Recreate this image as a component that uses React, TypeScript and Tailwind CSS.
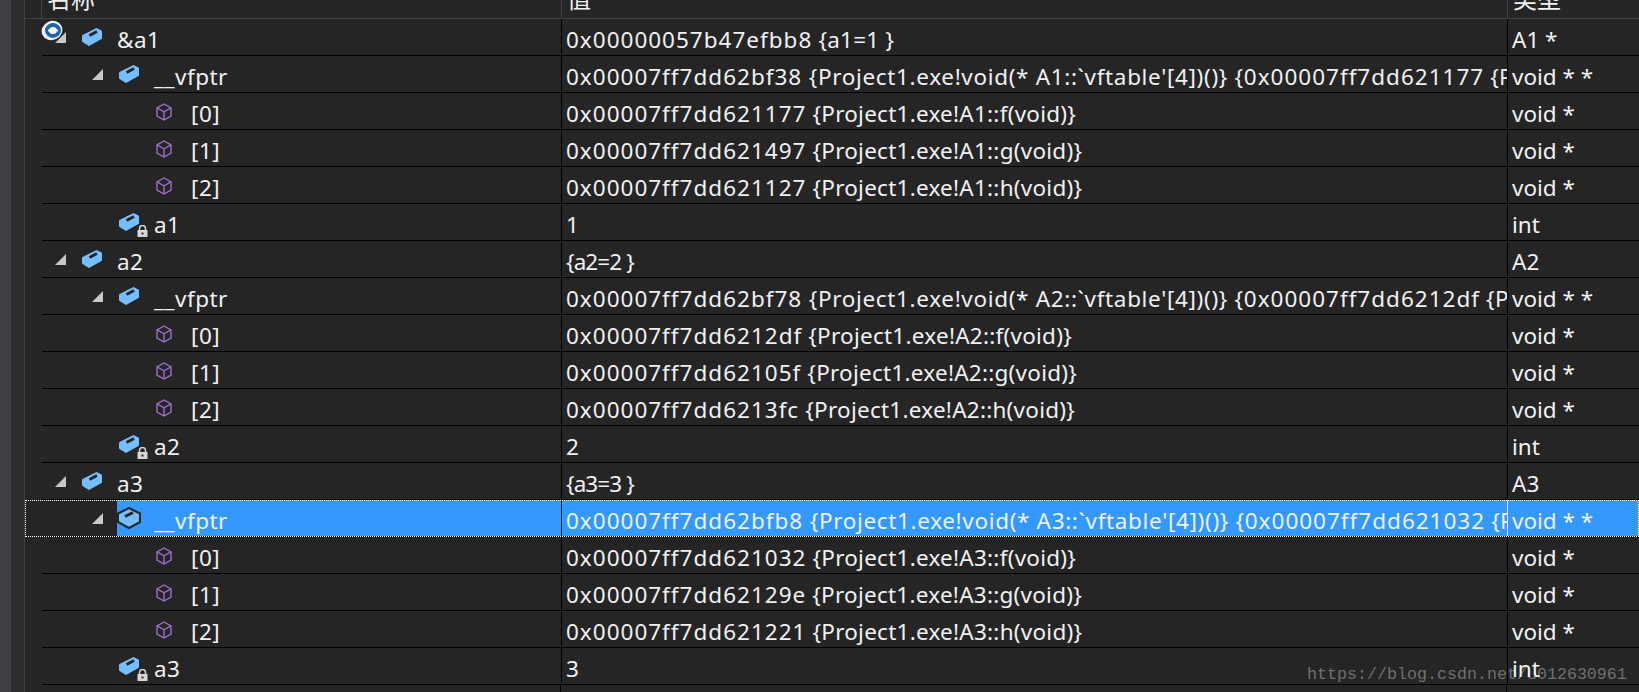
import React from 'react';

type Kind = 'object' | 'method' | 'locked';

interface WatchRow {
  depth: number;
  name: string;
  value: string;
  type: string;
  kind: Kind;
  open?: boolean;
  selected?: boolean;
}

const vtable = (n: string, addr: string, first: string): WatchRow[] => [
  {
    depth: 1,
    name: '__vfptr',
    value: `${addr} {Project1.exe!void(* ${n}::\`vftable'[4])()} {${first} {Project1.exe!${n}::f(void)}, ...`,
    type: 'void * *',
    kind: 'object',
    open: true,
  },
];

const method = (i: number, addr: string, n: string, fn: string): WatchRow => ({
  depth: 2,
  name: `[${i}]`,
  value: `${addr} {Project1.exe!${n}::${fn}(void)}`,
  type: 'void *',
  kind: 'method',
});

const rows: WatchRow[] = [
  { depth: 0, name: '&a1', value: '0x00000057b47efbb8 {a1=1 }', type: 'A1 *', kind: 'object' },
  ...vtable('A1', '0x00007ff7dd62bf38', '0x00007ff7dd621177'),
  method(0, '0x00007ff7dd621177', 'A1', 'f'),
  method(1, '0x00007ff7dd621497', 'A1', 'g'),
  method(2, '0x00007ff7dd621127', 'A1', 'h'),
  { depth: 1, name: 'a1', value: '1', type: 'int', kind: 'locked' },
  { depth: 0, name: 'a2', value: '{a2=2 }', type: 'A2', kind: 'object', open: true },
  ...vtable('A2', '0x00007ff7dd62bf78', '0x00007ff7dd6212df'),
  method(0, '0x00007ff7dd6212df', 'A2', 'f'),
  method(1, '0x00007ff7dd62105f', 'A2', 'g'),
  method(2, '0x00007ff7dd6213fc', 'A2', 'h'),
  { depth: 1, name: 'a2', value: '2', type: 'int', kind: 'locked' },
  { depth: 0, name: 'a3', value: '{a3=3 }', type: 'A3', kind: 'object', open: true },
  ...vtable('A3', '0x00007ff7dd62bfb8', '0x00007ff7dd621032').map(r => ({ ...r, selected: true })),
  method(0, '0x00007ff7dd621032', 'A3', 'f'),
  method(1, '0x00007ff7dd62129e', 'A3', 'g'),
  method(2, '0x00007ff7dd621221', 'A3', 'h'),
  { depth: 1, name: 'a3', value: '3', type: 'int', kind: 'locked' },
];

const Twisty = () => (
  <svg width="11" height="11" viewBox="0 0 11 11" className="shrink-0">
    <path d="M11 0V11H0Z" fill="#c8c8c8" />
  </svg>
);

const ObjectIcon = ({ selected }: { selected?: boolean }) =>
  selected ? (
    <svg width="24" height="22" viewBox="0 0 24 22" className="shrink-0">
      <path d="M12 1L23 6.5V15L12 21L1 15V6.5Z" fill="#75beff" stroke="#252526" strokeWidth="2" strokeLinejoin="round" />
      <path d="M8 9.5L16 5.5" stroke="#252526" strokeWidth="3" />
    </svg>
  ) : (
    <svg width="20" height="18" viewBox="0 0 20 18" className="shrink-0">
      <path d="M14.5 0.5L19.5 3V10.5L7 17.5L0.5 13.5V7.5Z" fill="#75beff" stroke="#75beff" strokeLinejoin="round" />
      <path d="M7.5 7.5L15 3.5" stroke="#252526" strokeWidth="3" />
    </svg>
  );

const CubeIcon = () => (
  <svg width="16" height="18" viewBox="0 0 16 18" className="shrink-0 translate-y-[1px]" fill="none" stroke="#9a6fc9" strokeWidth="1.4">
    <path d="M8 1L15 4.8V13.2L8 17L1 13.2V4.8Z" />
    <path d="M1 4.8L8 8.8L15 4.8M8 8.8V17" />
  </svg>
);

const LockIcon = () => (
  <svg width="11" height="12" viewBox="0 0 11 12" className="absolute left-[18px] top-[12px]">
    <path d="M2.5 5V3.5a3 3 0 0 1 6 0V5" fill="none" stroke="#d8d8d8" strokeWidth="1.5" />
    <path d="M0.5 5H10.5V12H0.5Z" fill="#d8d8d8" />
    <rect x="4.5" y="7.5" width="2" height="2" fill="#252526" />
  </svg>
);

// x of the twisty / icon for each tree level
const indent = ['pl-[13px]', 'pl-[50px]', 'pl-[114px]'];

// the hinted hex digits in the shot run wider than the rest of the text
const ValueText = ({ value }: { value: string }) => {
  if (value.startsWith('{a')) return <span className="tracking-[-0.9px]">{value}</span>;
  return (
    <>
      {value.split(/(0x[0-9a-f]+)/).map((part, i) =>
        part.startsWith('0x') ? (
          <span key={i} className="tracking-[1px]">{part}</span>
        ) : (
          <span key={i} className={part.includes('vftable') ? 'tracking-[0.66px]' : 'tracking-[0.25px]'}>{part}</span>
        ),
      )}
    </>
  );
};

const Row = ({ row }: { row: WatchRow }) => {
  const sel = row.selected;
  return (
    <div className={`flex h-[37px] ${sel ? 'outline-1 -outline-offset-1 outline-dotted outline-white relative z-10' : ''}`}>
      <div className="w-[17px] shrink-0" />
      <div className="flex min-w-0 flex-1 border-b border-black">
        <div className={`flex w-[519px] shrink-0 items-center ${indent[row.depth]}`}>
          {row.kind !== 'method' && (
            <div className="mr-[16px] w-[11px] shrink-0">{row.open && <Twisty />}</div>
          )}
          <div className={`flex h-full min-w-0 flex-1 items-center ${sel ? 'bg-[#3399ff] -ml-[2px] pl-0' : ''}`}>
            <div className="relative flex w-[35px] shrink-0">
              {row.kind === 'method' ? <CubeIcon /> : <ObjectIcon selected={sel} />}
              {row.kind === 'locked' && <LockIcon />}
            </div>
            <span className={`pt-[5px] tracking-[0.5px] ${sel ? 'ml-[2px]' : ''}`}>{row.name}</span>
          </div>
        </div>
        <div className="w-px shrink-0 bg-black" />
        <div className={`w-[945px] shrink-0 overflow-hidden whitespace-pre pl-[4px] pt-[3px] ${sel ? 'bg-[#3399ff]' : ''}`}>
          <span className="leading-[36px]"><ValueText value={row.value} /></span>
        </div>
        <div className={`w-px shrink-0 ${sel ? 'bg-white' : 'bg-black'}`} />
        <div className={`min-w-0 flex-1 pl-[4px] pt-[3px] leading-[36px] whitespace-pre ${sel ? 'bg-[#3399ff]' : ''}`}>{row.type}</div>
      </div>
    </div>
  );
};

export default function App() {
  return (
    <div className="relative flex h-[692px] w-[1639px] overflow-hidden bg-[#252526] text-[22.5px] text-[#f1f1f1] font-['Noto_Sans','Noto_Sans_CJK_SC',sans-serif]">
      <div className="w-[11px] shrink-0 bg-[#3f3f46]" />
      <div className="w-[14px] shrink-0 bg-[#2d2d30] border-r border-[#3f3f46]" />
      <div className="min-w-0 flex-1">
        <div className="flex h-[19px] overflow-hidden border-b border-[#3f3f46] pl-[16px] text-[24px] leading-[19px]">
          <div className="w-[520px] shrink-0 border-l border-[#3f3f46] pl-[5px]"><span className="relative -top-[11px]">名称</span></div>
          <div className="w-[946px] shrink-0 border-l border-[#3f3f46] pl-[5px]"><span className="relative -top-[11px]">值</span></div>
          <div className="flex-1 border-l border-[#3f3f46] pl-[5px]"><span className="relative -top-[11px]">类型</span></div>
        </div>
        {rows.map((row, i) => (
          <Row key={i} row={row} />
        ))}
        <div className="flex h-[10px] pl-[17px]">
          <div className="w-[519px] border-r border-black" />
          <div className="w-[946px] border-r border-black" />
        </div>
      </div>
      {/* process icon over the first row */}
      <svg width="25" height="23" viewBox="0 0 25 23" className="absolute left-[41px] top-[20px]">
        <ellipse cx="11" cy="10.5" rx="10.5" ry="9.5" fill="#f2f5fa" transform="rotate(-25 11 10.5)" />
        <ellipse cx="12" cy="10.5" rx="6" ry="5.5" fill="none" stroke="#1c63b0" strokeWidth="4" />
        <path d="M7 10.5H17" stroke="#f2f5fa" strokeWidth="2" />
        <path d="M25 12V23H14Z" fill="#c8c8c8" />
      </svg>
      <div className="absolute left-[1307px] top-[662px] font-['Liberation_Mono',monospace] text-[16.67px] text-white/35">
        https://blog.csdn.net/u012630961
      </div>
    </div>
  );
}
